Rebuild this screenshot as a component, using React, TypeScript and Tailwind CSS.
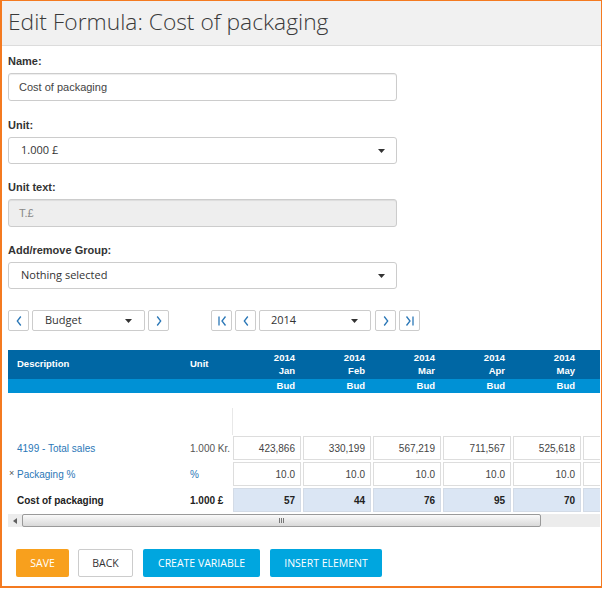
import React from "react";

const Caret = () => (
  <svg width="7" height="4" viewBox="0 0 7 4" className="shrink-0">
    <path d="M0 0h7L3.5 4z" fill="#333" />
  </svg>
);

const Chevron = ({ dir, bar }: { dir: "l" | "r"; bar?: boolean }) => (
  <svg width="12" height="12" viewBox="0 0 12 12">
    {dir === "l" ? (
      <>
        {bar && <path d="M3 1.5v9" stroke="#2a77b7" strokeWidth="1.3" fill="none" />}
        <path d={bar ? "M9.5 1.5L6 6l3.5 4.5" : "M7.8 1.5L4.3 6l3.5 4.5"} stroke="#2a77b7" strokeWidth="1.3" fill="none" />
      </>
    ) : (
      <>
        <path d={bar ? "M2.5 1.5L6 6l-3.5 4.5" : "M4.2 1.5L7.7 6l-3.5 4.5"} stroke="#2a77b7" strokeWidth="1.3" fill="none" />
        {bar && <path d="M9 1.5v9" stroke="#2a77b7" strokeWidth="1.3" fill="none" />}
      </>
    )}
  </svg>
);

const NavBtn = ({ dir, bar }: { dir: "l" | "r"; bar?: boolean }) => (
  <div className="w-[21px] h-[21px] shrink-0 border border-[#cccccc] rounded-[2px] bg-white flex items-center justify-center">
    <Chevron dir={dir} bar={bar} />
  </div>
);

const Field = ({ label, children, mb }: { label: string; children: React.ReactNode; mb: string }) => (
  <div className={mb}>
    <div className="h-4 leading-4 mb-1 text-[11px] font-bold text-[#333] font-['Liberation_Sans',Arial,sans-serif]">{label}</div>
    {children}
  </div>
);

const months = ["Jan", "Feb", "Mar", "Apr", "May", ""];
const sales = ["423,866", "330,199", "567,219", "711,567", "525,618", ""];
const pack = ["10.0", "10.0", "10.0", "10.0", "10.0", ""];
const cost = ["57", "44", "76", "95", "70", ""];

export default function App() {
  return (
    <div className="w-[602px] h-[588px] box-border border border-l-2 border-b-2 border-[#f47a20] bg-white overflow-hidden font-['Liberation_Sans',Arial,sans-serif] text-[#333]">
      {/* Header */}
      <div className="h-[45px] box-border border-b border-[#dcdcdc] bg-[#f1f1f1] pl-[6px]">
        <h1 className="text-[22.8px] leading-[41px] font-light text-[#3a3a3a] font-['Open_Sans',sans-serif]">
          Edit Formula: Cost of packaging
        </h1>
      </div>

      {/* Form */}
      <div className="pl-[6px] pt-[7px]">
        <Field label="Name:" mb="mb-[16px]">
          <div className="w-[389px] h-[28px] box-border border border-[#cccccc] rounded-[3px] px-[10px] flex items-center text-[11px] text-[#444] shadow-[inset_0_1px_1px_rgba(0,0,0,0.075)]">
            Cost of packaging
          </div>
        </Field>
        <Field label="Unit:" mb="mb-[15px]">
          <div className="w-[389px] h-[27px] box-border border border-[#cccccc] rounded-[3px] pl-[12px] pr-[11px] flex items-center justify-between text-[11px] text-[#333] font-['Open_Sans',sans-serif]">
            <span>1.000 £</span>
            <Caret />
          </div>
        </Field>
        <Field label="Unit text:" mb="mb-[15px]">
          <div className="w-[389px] h-[28px] box-border border border-[#cccccc] rounded-[3px] px-[10px] flex items-center text-[11px] text-[#888] bg-[#eeeeee] shadow-[inset_0_1px_1px_rgba(0,0,0,0.075)]">
            T.£
          </div>
        </Field>
        <Field label="Add/remove Group:" mb="mb-0">
          <div className="mt-[1px] w-[389px] h-[27px] box-border border border-[#cccccc] rounded-[3px] pl-[12px] pr-[11px] flex items-center justify-between text-[11px] text-[#333] font-['Open_Sans',sans-serif]">
            <span>Nothing selected</span>
            <Caret />
          </div>
        </Field>

        {/* Toolbar */}
        <div className="mt-[21px] flex items-center font-['Open_Sans',sans-serif] text-[11px] text-[#333]">
          <NavBtn dir="l" />
          <div className="ml-[3px] w-[113px] h-[21px] box-border border border-[#cccccc] rounded-[2px] pl-[12px] pr-[12px] flex items-center justify-between">
            <span>Budget</span>
            <Caret />
          </div>
          <div className="ml-[3px]">
            <NavBtn dir="r" />
          </div>
          <div className="ml-[42px]">
            <NavBtn dir="l" bar />
          </div>
          <div className="ml-[3px]">
            <NavBtn dir="l" />
          </div>
          <div className="ml-[3px] w-[112px] h-[21px] box-border border border-[#cccccc] rounded-[2px] pl-[11px] pr-[12px] flex items-center justify-between">
            <span>2014</span>
            <Caret />
          </div>
          <div className="ml-[4px]">
            <NavBtn dir="r" />
          </div>
          <div className="ml-[3px]">
            <NavBtn dir="r" bar />
          </div>
        </div>

        {/* Table */}
        <div className="mt-[19px] w-[592px] overflow-hidden">
          <div className="w-[652px]">
            {/* dark header */}
            <div className="flex h-[29px] bg-[#0067a4] text-white font-bold text-[9.5px]">
              <div className="w-[182px] pl-[9px] flex items-center">Description</div>
              <div className="w-[42px] flex items-center">Unit</div>
              {months.map((m, i) => (
                <div key={i} className="w-[70px] pr-[7px] pt-[1px] text-right leading-[13px]">
                  <div>{m ? "2014" : ""}</div>
                  <div>{m}</div>
                </div>
              ))}
            </div>
            {/* light header */}
            <div className="flex h-[14px] bg-[#0091d5] text-white font-bold text-[9.5px] leading-[14px]">
              <div className="w-[224px]" />
              {months.map((m, i) => (
                <div key={i} className="w-[70px] pr-[7px] text-right">{m ? "Bud" : ""}</div>
              ))}
            </div>
            {/* blank area */}
            <div className="h-[42px] pt-[15px] pl-[224px]">
              <div className="h-[27px] border-l border-[#e8e8e8]" />
            </div>
            {/* Row 1 */}
            <div className="flex h-[26px] text-[10px]">
              <div className="w-[182px] pl-[9px] flex items-center text-[#2a77b7]">4199 - Total sales</div>
              <div className="w-[42px] flex items-center text-[#555] whitespace-nowrap">1.000 Kr.</div>
              {sales.map((v, i) => (
                <div key={i} className="w-[70px] px-[1px] py-[1px]">
                  <div className="h-full box-border border border-[#dddddd] bg-white flex items-center justify-end pr-[5px] text-[#444]">{v}</div>
                </div>
              ))}
            </div>
            {/* Row 2 */}
            <div className="flex h-[26px] text-[10px]">
              <div className="w-[182px] pl-[1px] flex items-center">
                <span className="w-[8px] text-[#555] text-[9px]">×</span>
                <span className="text-[#2a77b7]">Packaging %</span>
              </div>
              <div className="w-[42px] flex items-center text-[#2a77b7]">%</div>
              {pack.map((v, i) => (
                <div key={i} className="w-[70px] px-[1px] py-[1px]">
                  <div className="h-full box-border border border-[#dddddd] bg-white flex items-center justify-end pr-[5px] text-[#444]">{v}</div>
                </div>
              ))}
            </div>
            {/* Row 3 */}
            <div className="flex h-[26px] text-[10px] font-bold">
              <div className="w-[182px] pl-[9px] flex items-center text-[#222]">Cost of packaging</div>
              <div className="w-[42px] flex items-center text-[#222] whitespace-nowrap">1.000 £</div>
              {cost.map((v, i) => (
                <div key={i} className="w-[70px] px-[1px] py-[1px]">
                  <div className="h-full box-border border border-[#d3dbe6] bg-[#dbe6f4] flex items-center justify-end pr-[5px] text-[#222]">{v}</div>
                </div>
              ))}
            </div>
          </div>
          {/* Scrollbar */}
          <div className="mt-[1px] h-[13px] flex bg-[#ececec]">
            <div className="w-[14px] h-full flex items-center justify-center">
              <svg width="4" height="6" viewBox="0 0 4 6"><path d="M4 0v6L0 3z" fill="#606060" /></svg>
            </div>
            <div className="w-[519px] h-full box-border border border-[#9a9a9a] rounded-[2px] bg-gradient-to-b from-[#fafafa] to-[#d9d9d9] flex items-center justify-center">
              <div className="flex gap-[1px]">
                <div className="w-px h-[5px] bg-[#777]" />
                <div className="w-px h-[5px] bg-[#777]" />
                <div className="w-px h-[5px] bg-[#777]" />
              </div>
            </div>
            <div className="flex-1" />
          </div>
        </div>
      </div>

      {/* Buttons */}
      <div className="mt-[22px] pl-[14px] flex font-['Open_Sans',sans-serif] text-[10.5px] leading-none">
        <div className="w-[53px] h-[28px] rounded-[2px] bg-[#f8a01d] text-white flex items-center justify-center">SAVE</div>
        <div className="ml-[9px] w-[55px] h-[28px] box-border border border-[#cccccc] rounded-[2px] bg-white text-[#333] flex items-center justify-center">BACK</div>
        <div className="ml-[10px] w-[117px] h-[28px] rounded-[2px] bg-[#00a6df] text-white flex items-center justify-center">CREATE VARIABLE</div>
        <div className="ml-[10px] w-[112px] h-[28px] rounded-[2px] bg-[#00a6df] text-white flex items-center justify-center">INSERT ELEMENT</div>
      </div>
    </div>
  );
}
